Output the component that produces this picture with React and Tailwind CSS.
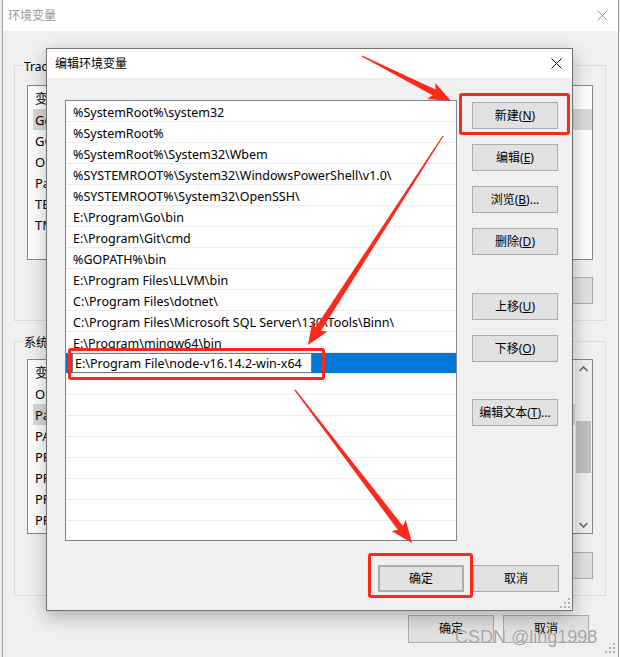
import React from "react";

const Btn = ({ children, className = "" }) => (
  <div
    className={`flex h-[27px] w-[86px] shrink-0 items-center justify-center border border-[#adadad] bg-[#e1e1e1] text-[12px] text-black ${className}`}
  >
    {children}
  </div>
);

const CloseX = ({ color = "#000" }) => (
  <svg width="11" height="11" viewBox="0 0 11 11">
    <path d="M0.5 0.5 L10.5 10.5 M10.5 0.5 L0.5 10.5" stroke={color} strokeWidth="1" />
  </svg>
);

const Grip = () => (
  <svg width="10" height="10" viewBox="0 0 10 10">
    {[
      [8, 0],
      [8, 4],
      [4, 4],
      [8, 8],
      [4, 8],
      [0, 8],
    ].map(([x, y]) => (
      <rect key={`${x}-${y}`} x={x} y={y} width="2" height="2" fill="#b4b4b4" />
    ))}
  </svg>
);

const userVars = ["GoLand", "GOPATH", "OneDrive", "Path", "TEMP", "TMP"];
const sysVars = ["OS", "Path", "PATHEXT", "PROCESSOR_ARCHITECTURE", "PROCESSOR_IDENTIFIER", "PROCESSOR_LEVEL", "PROCESSOR_REVISION"];

const paths = [
  "%SystemRoot%\\system32",
  "%SystemRoot%",
  "%SystemRoot%\\System32\\Wbem",
  "%SYSTEMROOT%\\System32\\WindowsPowerShell\\v1.0\\",
  "%SYSTEMROOT%\\System32\\OpenSSH\\",
  "E:\\Program\\Go\\bin",
  "E:\\Program\\Git\\cmd",
  "%GOPATH%\\bin",
  "E:\\Program Files\\LLVM\\bin",
  "C:\\Program Files\\dotnet\\",
  "C:\\Program Files\\Microsoft SQL Server\\130\\Tools\\Binn\\",
  "E:\\Program\\mingw64\\bin",
];

// small list used in the background window (mostly hidden)
const VarList = ({ items, highlight, scroll }) => (
  <div className="relative h-[175px] w-[566px] overflow-hidden border border-[#828790] bg-white text-[13px]">
    <div className="flex h-[23px] items-center pl-[7px] pt-[3px]">变量</div>
    {items.map((v) => (
      <div
        key={v}
        className={`ml-[5px] flex h-[21px] items-center pl-[2px] pt-[2px] ${v === highlight ? "bg-[#d9d9d9]" : ""}`}
      >
        {v}
      </div>
    ))}
    {scroll && (
      <div className="absolute right-0 top-0 flex h-full w-[17px] flex-col items-center bg-[#f0f0f0]">
        <div className="flex h-[17px] items-center justify-center">
          <svg width="9" height="6" viewBox="0 0 9 6">
            <path d="M0.5 5 L4.5 1 L8.5 5" stroke="#606060" strokeWidth="1.5" fill="none" />
          </svg>
        </div>
        <div className="mt-[44px] h-[52px] w-[15px] bg-[#c1c1c1]" />
        <div className="flex-1" />
        <div className="flex h-[17px] items-center justify-center">
          <svg width="9" height="6" viewBox="0 0 9 6">
            <path d="M0.5 1 L4.5 5 L8.5 1" stroke="#606060" strokeWidth="1.5" fill="none" />
          </svg>
        </div>
      </div>
    )}
  </div>
);

const BackWindow = () => (
  <div className="absolute left-[2px] top-0 flex h-[680px] w-[617px] flex-col border-x border-[#a0a0a0] bg-[#f0f0f0]">
    <div className="flex h-[31px] shrink-0 items-center justify-between bg-white pl-[5px] pr-[10px]">
      <span className="text-[12px] text-[#999]">环境变量</span>
      <CloseX color="#999" />
    </div>
    <div className="pl-[11px]">
      <div className="relative mt-[34px] h-[256px] w-[592px] border border-[#dcdcdc] pl-[12px] pt-[19px]">
        <span className="absolute left-[8px] top-[-7px] bg-[#f0f0f0] px-[1px] text-[12px] leading-[16px]">Tracy 的用户变量(U)</span>
        <VarList items={userVars} highlight="GoLand" />
        <div className="mt-[17px] flex w-[566px] justify-end gap-[9px]">
          <Btn>新建(<u>N</u>)...</Btn>
          <Btn>编辑(<u>E</u>)...</Btn>
          <Btn>删除(<u>D</u>)</Btn>
        </div>
      </div>
      <div className="relative mt-[20px] h-[255px] w-[592px] border border-[#dcdcdc] pl-[12px] pt-[17px]">
        <span className="absolute left-[8px] top-[-7px] bg-[#f0f0f0] px-[1px] text-[12px] leading-[16px]">系统变量(<u>S</u>)</span>
        <VarList items={sysVars} highlight="Path" scroll />
        <div className="mt-[18px] flex w-[566px] justify-end gap-[9px]">
          <Btn>新建(<u>W</u>)...</Btn>
          <Btn>编辑(<u>I</u>)...</Btn>
          <Btn>删除(<u>L</u>)</Btn>
        </div>
      </div>
      <div className="mt-[19px] flex w-[575px] justify-end gap-[9px]">
        <Btn className="h-[28px]">确定</Btn>
        <Btn className="h-[28px]">取消</Btn>
      </div>
    </div>
    <div className="absolute right-[3px] top-[643px]">
      <Grip />
    </div>
  </div>
);

const EditDialog = () => (
  <div className="absolute left-[46px] top-[48px] flex h-[563px] w-[527px] flex-col border border-[#707070] bg-[#f0f0f0] shadow-[0_6px_18px_rgba(0,0,0,0.28)]">
    <div className="flex h-[29px] shrink-0 items-center justify-between bg-white pl-[8px] pr-[10px]">
      <span className="text-[12px] text-black">编辑环境变量</span>
      <CloseX />
    </div>
    <div className="flex pl-[18px] pt-[22px]">
      <div className="h-[441px] w-[392px] overflow-hidden border border-[#828790] bg-white text-[12.5px] text-black">
        {paths.map((p) => (
          <div key={p} className="flex h-[21px] items-center whitespace-nowrap border-b border-[#ececec] pl-[7px] pt-[4px]">
            {p}
          </div>
        ))}
        <div className="flex h-[21px] items-center border-b border-[#ececec] bg-[#0078d7] pl-[6px]">
          <div className="flex h-[20px] w-[240px] items-center border border-[#7a7a7a] bg-white pl-[2px] pt-[3px]">
            E:\Program File\node-v16.14.2-win-x64
          </div>
        </div>
        {Array.from({ length: 9 }).map((_, i) => (
          <div key={i} className="h-[21px] border-b border-[#ececec]" />
        ))}
      </div>
      <div className="ml-[15px] mt-[2px] flex flex-col gap-[15px]">
        <Btn>新建(<u>N</u>)</Btn>
        <Btn>编辑(<u>E</u>)</Btn>
        <Btn>浏览(<u>B</u>)...</Btn>
        <Btn>删除(<u>D</u>)</Btn>
        <Btn className="mt-[23px]">上移(<u>U</u>)</Btn>
        <Btn>下移(<u>O</u>)</Btn>
        <Btn className="mt-[22px]">编辑文本(<u>T</u>)...</Btn>
      </div>
    </div>
    <div className="mt-[24px] flex justify-end gap-[9px] pr-[13px]">
      <Btn className="border-2 border-[#0078d7]">确定</Btn>
      <Btn>取消</Btn>
    </div>
    <div className="absolute bottom-[2px] right-[2px]">
      <Grip />
    </div>
  </div>
);

// red snipping-tool arrow from (x1,y1) to tip (x2,y2)
const arrowPoints = (x1, y1, x2, y2, head = 22, wing = 9, shaft = 3.2) => {
  const dx = x2 - x1;
  const dy = y2 - y1;
  const len = Math.hypot(dx, dy);
  const ux = dx / len;
  const uy = dy / len;
  const nx = -uy;
  const ny = ux;
  const bx = x2 - ux * head;
  const by = y2 - uy * head;
  const pts = [
    [x1 + nx * 0.6, y1 + ny * 0.6],
    [bx + ux * 3 + nx * shaft, by + uy * 3 + ny * shaft],
    [bx + nx * wing, by + ny * wing],
    [x2, y2],
    [bx - nx * wing, by - ny * wing],
    [bx + ux * 3 - nx * shaft, by + uy * 3 - ny * shaft],
    [x1 - nx * 0.6, y1 - ny * 0.6],
  ];
  return pts.map((p) => p.map((v) => v.toFixed(1)).join(",")).join(" ");
};

const Annotations = () => (
  <>
    <svg className="pointer-events-none absolute left-0 top-0" width="620" height="657">
      <polygon points={arrowPoints(362, 56, 451, 101)} fill="#fb2a1c" />
      <polygon points={arrowPoints(443, 136, 308, 345)} fill="#fb2a1c" />
      <polygon points={arrowPoints(295, 390, 412, 543)} fill="#fb2a1c" />
    </svg>
    <div className="absolute left-[459px] top-[93px] h-[42px] w-[111px] rounded-[3px] border-[3px] border-[#fb2a1c]" />
    <div className="absolute left-[68px] top-[348px] h-[32px] w-[257px] rounded-[3px] border-[3px] border-[#fb2a1c]" />
    <div className="absolute left-[368px] top-[553px] h-[45px] w-[105px] rounded-[3px] border-[3px] border-[#fb2a1c]" />
  </>
);

export default function App() {
  return (
    <div className="relative h-[657px] w-[620px] overflow-hidden bg-[#ebebeb] font-['Noto_Sans','Noto_Sans_CJK_SC',sans-serif] text-black">
      <BackWindow />
      <EditDialog />
      <Annotations />
      <div className="absolute left-[455px] top-[624px] font-['Liberation_Sans',sans-serif] text-[18px] text-[#a3a3a3] [text-shadow:0_0_1px_#fff]">
        CSDN @ling1998
      </div>
    </div>
  );
}
